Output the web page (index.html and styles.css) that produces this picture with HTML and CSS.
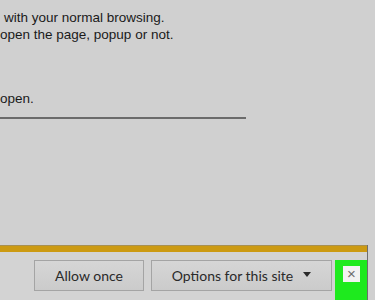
FILE: index.html
```html
<!DOCTYPE html>
<html lang="en">
<head>
    <meta charset="UTF-8">
    <title>Popup blocked</title>
    <link rel="stylesheet" href="styles.css">
</head>
<body>
    <div class="page">
        <div class="notes">
            <p class="note-line first">with your normal browsing.</p>
            <p class="note-line">open the page, popup or not.</p>
            <p class="note-line spaced">open.</p>
            <div class="rule"></div>
        </div>

        <div class="bar">
            <div class="bar-stripe"></div>
            <div class="bar-body">
                <button class="bar-button allow">Allow once</button>
                <button class="bar-button options">Options for this site <span class="caret"></span></button>
                <div class="close-wrap">
                    <span class="close-box">&times;</span>
                </div>
            </div>
        </div>
    </div>
</body>
</html>
```

FILE: styles.css
```css
* {
    margin: 0;
    padding: 0;
    box-sizing: border-box;
}

body {
    font-family: 'Liberation Sans', Arial, sans-serif;
    background: #d0d0d0;
    width: 375px;
    height: 300px;
    overflow: hidden;
}

.page {
    height: 300px;
    display: flex;
    flex-direction: column;
}

.notes {
    padding-top: 9px;
    color: #1a1a1a;
    font-size: 13.5px;
}

.note-line {
    line-height: 17px;
}

.note-line.first {
    padding-left: 4px;
}

.note-line.spaced {
    margin-top: 47px;
}

.rule {
    margin-top: 10px;
    width: 246px;
    height: 2px;
    background: #6b6b6b;
}

.bar {
    margin-top: auto;
    margin-right: 7px;
    border-right: 1px solid #6e6e6e;
}

.bar-stripe {
    height: 7px;
    background: #cc9a12;
    border-top: 1px solid #a89050;
}

.bar-body {
    display: flex;
    justify-content: flex-end;
    align-items: flex-start;
    height: 48px;
    padding-top: 8px;
    background: #d3d3d3;
}

.bar-button {
    height: 31px;
    border: 1px solid #a4a4a4;
    background: linear-gradient(#d6d6d6, #cbcbcb);
    font-family: Lato, 'Liberation Sans', sans-serif;
    font-size: 14px;
    color: #2a2a2a;
    padding: 0 10px;
}

.allow {
    width: 110px;
    margin-right: 7px;
}

.options {
    width: 181px;
    margin-right: 3px;
    display: flex;
    align-items: center;
    justify-content: center;
    gap: 10px;
}

.caret {
    width: 0;
    height: 0;
    border-left: 4px solid transparent;
    border-right: 4px solid transparent;
    border-top: 5px solid #2a2a2a;
    margin-top: -3px;
}

.close-wrap {
    width: 32px;
    height: 40px;
    background: #1eea1e;
    display: flex;
    justify-content: center;
    padding-top: 6px;
    padding-left: 1px;
}

.close-box {
    width: 17px;
    height: 16px;
    background: #f2f2f2;
    color: #6e6e6e;
    font-size: 15px;
    line-height: 15px;
    text-align: center;
}
```
